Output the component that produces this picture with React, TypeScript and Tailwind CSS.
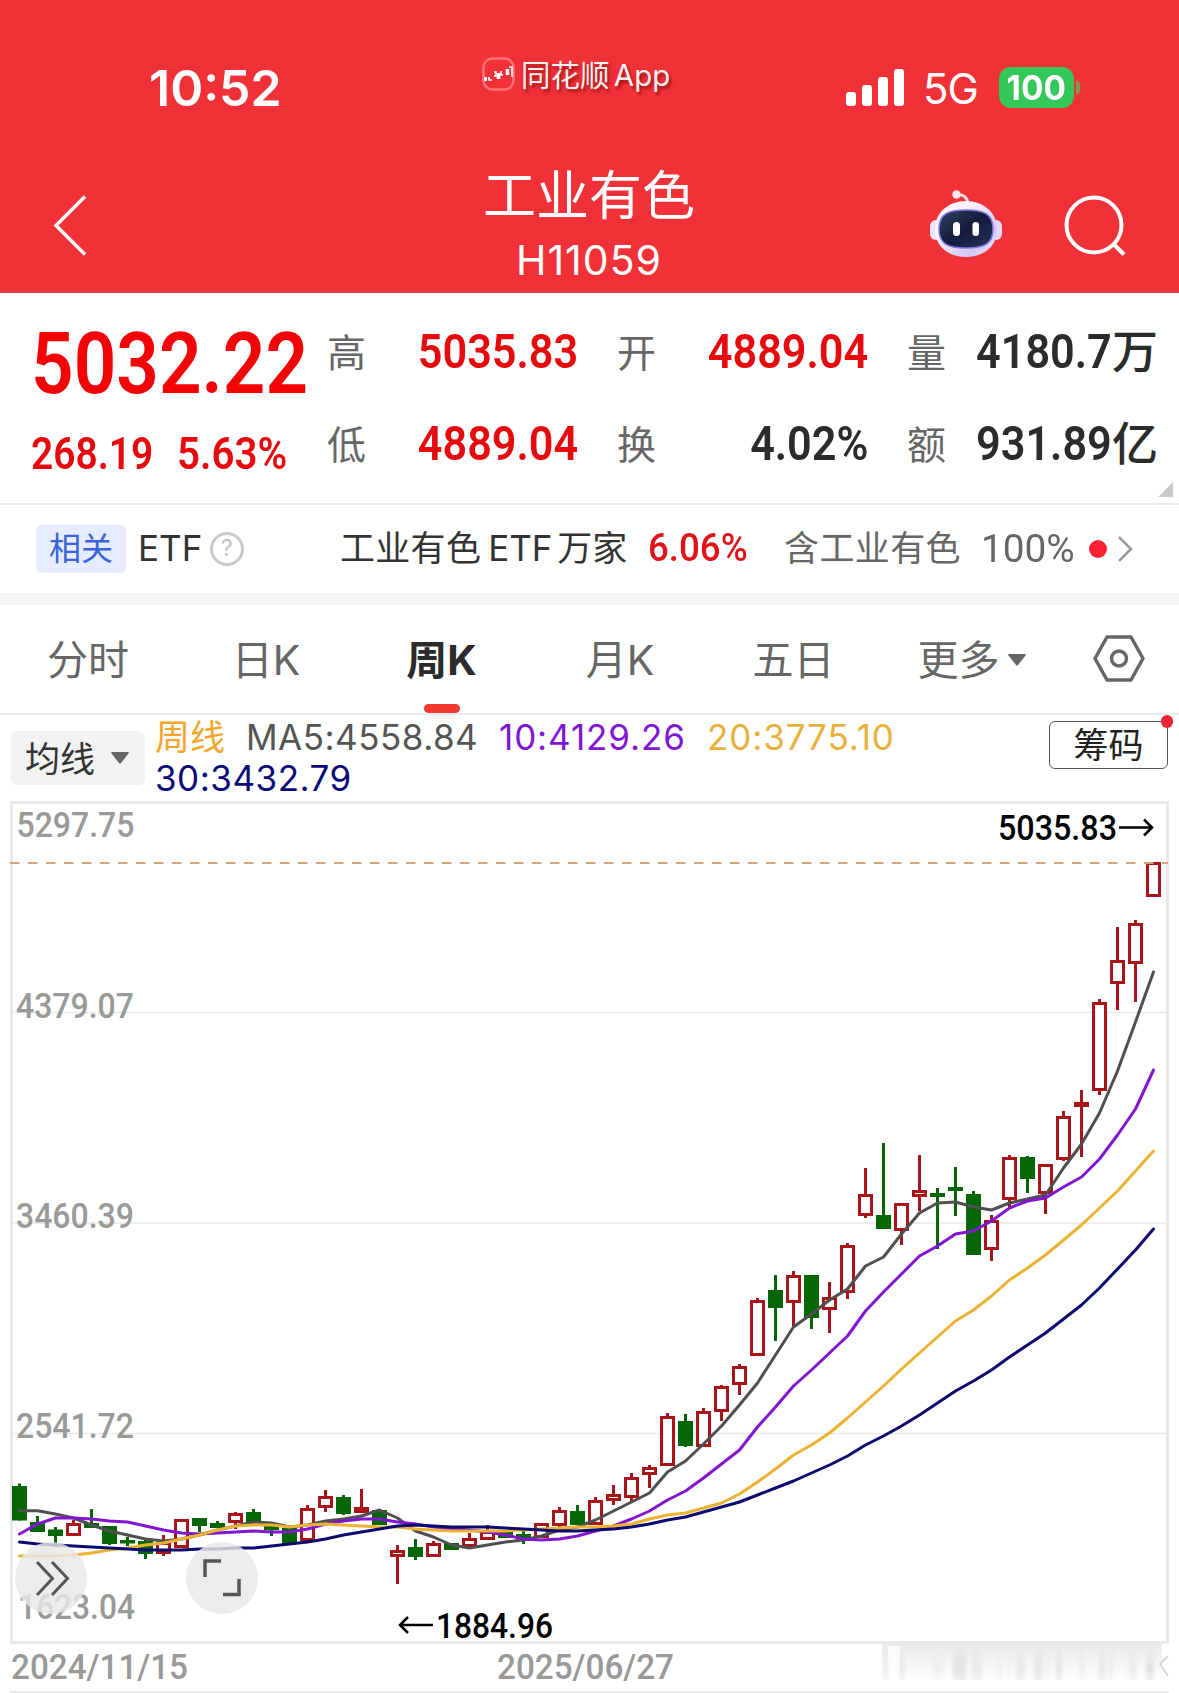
import { ReactNode } from "react";

type Candle = {
  up: boolean;
  top: number;
  bottom: number;
  high: number;
  low: number;
};

const UP = true;
const DOWN = false;

// [up, body top, body bottom, high, low] in chart pixels
const RAW: [boolean, number, number, number, number][] = [
  [DOWN, 1486, 1520.5, 1483.5, 1520.5],
  [DOWN, 1522, 1532, 1516, 1532],
  [DOWN, 1529.5, 1536, 1527, 1547],
  [UP, 1523, 1536, 1520, 1536],
  [DOWN, 1523, 1528, 1509, 1528],
  [DOWN, 1526, 1544, 1526, 1545],
  [DOWN, 1540, 1543.5, 1537, 1546],
  [DOWN, 1541, 1554, 1538, 1559],
  [UP, 1542, 1554, 1535, 1556],
  [UP, 1519, 1548, 1519, 1548],
  [DOWN, 1518, 1526, 1518, 1532],
  [DOWN, 1523, 1528, 1521, 1528],
  [UP, 1513, 1523, 1512, 1529],
  [DOWN, 1512, 1523, 1509, 1523],
  [DOWN, 1525, 1530, 1525, 1536],
  [DOWN, 1528, 1544, 1528, 1544],
  [UP, 1508, 1541, 1505, 1541],
  [UP, 1496, 1508, 1490, 1512],
  [DOWN, 1497, 1514, 1495, 1515],
  [UP, 1507, 1513, 1489, 1513],
  [DOWN, 1510, 1525, 1510, 1525],
  [UP, 1550, 1557, 1545, 1584],
  [DOWN, 1547, 1557, 1539, 1560],
  [UP, 1543, 1557, 1541, 1557],
  [DOWN, 1543, 1550, 1543, 1550],
  [UP, 1538, 1547, 1533, 1547],
  [UP, 1531, 1540, 1525, 1540],
  [DOWN, 1531, 1538, 1531, 1538],
  [DOWN, 1534, 1541, 1530, 1544],
  [UP, 1523, 1538, 1523, 1538],
  [UP, 1510, 1526, 1507, 1527],
  [DOWN, 1511, 1525, 1505, 1525],
  [UP, 1500, 1525, 1497, 1525],
  [UP, 1494, 1501, 1485, 1505],
  [UP, 1477, 1498, 1473, 1503],
  [UP, 1467, 1475, 1465, 1488],
  [UP, 1416, 1466, 1413, 1466],
  [DOWN, 1421, 1446, 1414, 1447],
  [UP, 1411, 1447, 1408, 1447],
  [UP, 1386, 1412, 1385, 1421],
  [UP, 1366, 1385, 1364, 1395],
  [UP, 1300, 1356, 1298, 1356],
  [DOWN, 1290, 1308, 1275, 1341],
  [UP, 1275, 1303, 1271, 1327],
  [DOWN, 1275, 1318, 1275, 1329],
  [UP, 1297, 1310, 1282, 1333],
  [UP, 1245, 1293, 1243, 1299],
  [UP, 1194, 1216, 1168, 1218],
  [DOWN, 1215, 1229, 1143, 1229],
  [UP, 1203, 1231, 1203, 1245],
  [UP, 1190, 1197, 1155, 1211],
  [DOWN, 1193, 1197, 1188, 1249],
  [DOWN, 1187, 1191, 1167, 1216],
  [DOWN, 1194, 1255, 1191, 1255],
  [UP, 1220, 1250, 1215, 1261],
  [UP, 1157, 1200, 1155, 1207],
  [DOWN, 1157, 1179, 1156, 1193],
  [UP, 1164, 1194, 1164, 1214],
  [UP, 1116, 1160, 1111, 1161],
  [UP, 1102, 1107, 1090, 1157],
  [UP, 1002, 1091, 999, 1095],
  [UP, 960, 984, 927, 1010],
  [UP, 923, 964, 920, 1002],
  [UP, 862, 897, 862, 897],
];

const candles: Candle[] = RAW.map(([up, top, bottom, high, low]) => ({ up, top, bottom, high, low }));

const ma5 = [
  1510.7, 1510.7, 1514, 1518, 1525, 1531, 1535, 1539, 1541, 1539, 1535, 1530, 1526, 1522, 1523, 1527,
  1525, 1521, 1519, 1516, 1510, 1518, 1531, 1537, 1545, 1548, 1545, 1542, 1540, 1536, 1530, 1527,
  1520, 1511, 1502, 1493, 1472, 1461, 1444, 1426, 1405, 1383, 1355, 1327, 1314, 1300, 1289, 1266,
  1257, 1234, 1213, 1203, 1202, 1207, 1210, 1203, 1199, 1195, 1168, 1144, 1113, 1071, 1022, 972,
];
const ma10 = [
  1534, 1524, 1518, 1518, 1519, 1521, 1522, 1526, 1530, 1533, 1534, 1533, 1532, 1531, 1532, 1532,
  1529, 1524, 1521, 1519, 1519, 1522, 1524, 1527, 1529, 1530, 1532, 1535, 1539, 1540, 1539, 1536,
  1531, 1526, 1519, 1511, 1500, 1491, 1478, 1464, 1450, 1427, 1407, 1386, 1370, 1353, 1336, 1311,
  1292, 1274, 1256, 1246, 1234, 1231, 1221, 1208, 1201, 1198, 1187, 1177, 1159, 1135, 1109, 1070,
];
const ma20 = [
  1556, 1556, 1556, 1555, 1553, 1550, 1548, 1545, 1543, 1539, 1535, 1530, 1526, 1525, 1525, 1527,
  1525, 1524, 1525, 1526, 1527, 1527, 1529, 1530, 1531, 1531, 1531, 1531, 1530, 1529, 1528, 1527,
  1527, 1526, 1524, 1519, 1515, 1513, 1508, 1503, 1494, 1482, 1469, 1455, 1445, 1433, 1418, 1402,
  1386, 1369, 1353, 1337, 1321, 1310, 1296, 1280, 1268, 1255, 1240, 1225, 1208, 1191, 1171, 1151,
];
const ma30 = [
  1542, 1544, 1545, 1546, 1547, 1548, 1549, 1550, 1550, 1550, 1549, 1549, 1548, 1548, 1546, 1544,
  1542, 1539, 1535, 1532, 1529, 1526, 1525, 1526, 1527, 1527, 1527, 1528, 1529, 1530, 1531, 1531,
  1530, 1529, 1527, 1524, 1520, 1517, 1512, 1507, 1502, 1495, 1488, 1481, 1473, 1465, 1456, 1445,
  1436, 1426, 1415, 1403, 1391, 1381, 1370, 1357, 1345, 1333, 1319, 1305, 1288, 1269, 1250, 1229,
];

const CHART_TOP = 795;
const candleX = (i: number) => 19.5 + i * 18;
const toPoints = (values: number[]) => values.map((y, i) => `${candleX(i)},${y}`).join(" ");

const axisLabels = [
  { text: "5297.75", x: 16.5, y: 837, width: 118 },
  { text: "4379.07", x: 16, y: 1017.5, width: 118 },
  { text: "3460.39", x: 16, y: 1228, width: 118 },
  { text: "2541.72", x: 16, y: 1438, width: 118 },
  { text: "1623.04", x: 18, y: 1619, width: 117 },
];

const dates = [
  { text: "2024/11/15", x: 11, width: 177 },
  { text: "2025/06/27", x: 497, width: 177 },
];

// Soft grey streaks at the end of the date row: [x, width, opacity]
const streaks = [
  [884, 4, 0.3], [900, 4, 0.4], [932, 12, 0.15], [953, 13, 0.4], [972, 10, 0.3], [997, 5, 0.15],
  [1008, 3, 0.15], [1016, 9, 0.3], [1034, 9, 0.35], [1047, 3, 0.2], [1057, 4, 0.55], [1080, 4, 0.25],
  [1099, 6, 0.35], [1109, 4, 0.25], [1129, 7, 0.25], [1147, 6, 0.5],
];

function StatusBar() {
  return (
    <div className="flex h-[150px] items-start">
      <div className="ml-[149px] mt-[62px] w-[333px] text-[50px] font-semibold leading-[52px]">
        10:52
      </div>
      <div className="mt-[57px] flex h-[36px] w-[364px] items-center">
        <svg className="-mt-[2px]" width="33" height="34" viewBox="0 0 33 34" fill="none">
          <rect x="1.5" y="1.5" width="30" height="31" rx="9" stroke="#ff7176" strokeWidth="2.5" />
          <path d="M2 22h3" stroke="#fff" strokeWidth="4" />
          <path d="M7 20v3h3M12 15h2v4h-2M19 14v4h2M27 10h3v10" stroke="#fff" strokeWidth="1.6" />
          <path d="M16.500 16v6M25.500 12v6" stroke="#fff" strokeWidth="3.5" />
        </svg>
        <span className="mt-[2px] ml-[6px] whitespace-nowrap text-[29.5px] leading-none text-white/95 [text-shadow:2px_3px_3px_rgba(90,0,0,0.55)]">
          同花顺 <span className="-ml-[4px]">App</span>
        </span>
      </div>
      <svg className="mt-[69px]" width="58" height="38" fill="#fff">
        <rect x="0" y="23" width="10" height="14" rx="3" />
        <rect x="16" y="16" width="10" height="21" rx="3" />
        <rect x="32" y="8" width="10" height="29" rx="3" />
        <rect x="48" y="0" width="10" height="37" rx="3" />
      </svg>
      <span className="ml-[19px] mt-[68px] w-[76px] text-[42px] leading-[42px] tracking-[-1px]">5G</span>
      <div className="mt-[67px] flex h-[41px] w-[75px] items-center justify-center rounded-[12px] bg-[#34c759] text-[34px] font-bold leading-none">
        <span className="inline-block scale-x-[.98]">100</span>
      </div>
      <div className="ml-[2px] mt-[81px] h-[13px] w-[4px] rounded-r-full bg-[#7d9a4b]" />
    </div>
  );
}

function Robot() {
  return (
    <svg width="74" height="68" viewBox="0 0 74 68" fill="none">
      <defs>
        <linearGradient id="shell" x1="0" y1="0" x2="1" y2="1">
          <stop offset="0.3" stopColor="#fdf3fa" />
          <stop offset="0.75" stopColor="#d3c6f6" />
          <stop offset="1" stopColor="#f0f0ff" />
        </linearGradient>
        <linearGradient id="visor" x1="0" y1="0" x2="1" y2="1">
          <stop offset="0" stopColor="#2f4663" />
          <stop offset="0.5" stopColor="#141a3c" />
          <stop offset="1" stopColor="#27345a" />
        </linearGradient>
      </defs>
      <path d="M28 5c6-1 10 2 11 8" stroke="#fbdfe6" strokeWidth="3" />
      <circle cx="27.500" cy="4.500" r="4.200" fill="#fdeaf0" />
      <rect x="1" y="30" width="12" height="20" rx="6" fill="#efe4fb" />
      <rect x="61" y="30" width="12" height="20" rx="6" fill="#e4d9fa" />
      <path d="M37 11C54 11 68 22 68 39C68 57 54 67 37 67C20 67 6 57 6 39C6 22 20 11 37 11Z" fill="url(#shell)" />
      <path d="M37 20C55 20 64 24 64 39C64 54 55 58 37 58C19 58 10 54 10 39C10 24 19 20 37 20Z" fill="url(#visor)" stroke="#7d74dd" strokeWidth="1.500" />
      <rect x="24" y="32" width="7" height="14" rx="3.500" fill="#fff" />
      <rect x="43.500" y="32" width="6.500" height="14" rx="3.200" fill="#fff" />
    </svg>
  );
}

function Header() {
  return (
    <header className="h-[293px] border-b-2 border-[#dd3b40] bg-[#f03137] text-white">
      <StatusBar />
      <div className="flex items-start">
        <svg className="ml-[51px] mt-[43px]" width="38" height="64" viewBox="0 0 38 64" fill="none" stroke="#fff" strokeWidth="3.5">
          <path d="M34 3.500L5 32.500L34 61.500" />
        </svg>
        <div className="ml-[339px] w-[322px] text-center">
          <h1 className="mt-[19px] text-[53px] leading-[54px] whitespace-nowrap">工业有色</h1>
          <p className="mt-[16px] text-[41px] leading-[42px] tracking-[1px]">H11059</p>
        </div>
        <div className="ml-[179px] mt-[40px]">
          <Robot />
        </div>
        <svg className="ml-[60px] mt-[43px]" width="64" height="64" viewBox="0 0 64 64" fill="none" stroke="#fff" strokeWidth="4">
          <circle cx="31" cy="32" r="27.500" />
          <path d="M50 50.500L61 61.500" />
        </svg>
      </div>
    </header>
  );
}

function Stat({ label, value, unit, red }: { label: string; value: string; unit?: string; red?: boolean }) {
  return (
    <div className="flex items-center justify-between">
      <span className="mt-[2px] text-[39px] leading-none text-[#666]">{label}</span>
      <span className={`flex items-center font-['Roboto'] text-[48px] leading-none ${red ? "text-[#e60a0f]" : "text-[#2b2b2b]"}`}>
        <span className="mt-[1px] inline-block origin-right scale-x-[.9] font-semibold">{value}</span>
        {unit && <span className="-mt-[6px] font-['Noto_Sans_CJK_SC'] text-[46px] font-medium">{unit}</span>}
      </span>
    </div>
  );
}

function Quote() {
  return (
    <section className="relative flex h-[212px] border-b-2 border-[#ececec] bg-white pl-[31px]">
      <div className="w-[296px] font-['Roboto'] text-[#e60a0f]">
        <div className="mt-[29px] h-[84px] origin-left scale-x-[.878] text-[85px] font-semibold leading-[84px] text-[#f30206]">
          5032.22
        </div>
        <div className="mt-[24px] flex h-[46px] font-semibold text-[44px] leading-[48px]">
          <span className="w-[146px] origin-left scale-x-[.885]">268.19</span>
          <span className="origin-left scale-x-[.915]">5.63%</span>
        </div>
      </div>
      <div className="mt-[12px] grid h-[184px] w-[831px] grid-cols-3 grid-rows-2 gap-x-[39px]">
        <Stat label="高" value="5035.83" red />
        <Stat label="开" value="4889.04" red />
        <Stat label="量" value="4180.7" unit="万" />
        <Stat label="低" value="4889.04" red />
        <Stat label="换" value="4.02%" />
        <Stat label="额" value="931.89" unit="亿" />
      </div>
      <svg className="absolute right-[6px] bottom-[6px]" width="15" height="15">
        <path d="M15 0V15H0Z" fill="#c9c9c9" />
      </svg>
    </section>
  );
}

function RelatedEtf() {
  return (
    <section className="flex h-[88px] items-center bg-white pb-[1px] pl-[36px] text-[35px] leading-none whitespace-nowrap text-[#333]">
      <span className="flex h-[48px] w-[90px] items-center justify-center rounded-[5px] bg-[#e6ecfe] text-[32px] text-[#3a63dc]">
        相关
      </span>
      <span className="ml-[12px] w-[72px]">ETF</span>
      <span className="flex h-[34px] w-[34px] items-center justify-center rounded-full border-[3px] border-[#c9c9c9] text-[23px] text-[#c0c0c0]">
        ?
      </span>
      <span className="ml-[96px] w-[308px]">
        <span className="tracking-[.3px]">工业有色</span>
        <span className="mr-[5px] ml-[7px] inline-block w-[64px]">ETF</span>
        <span>万家</span>
      </span>
      <span className="w-[136px] origin-left scale-x-[.94] font-['Roboto'] text-[39px] font-medium text-[#e01418]">6.06%</span>
      <span className="w-[197px] tracking-[.4px] text-[#666]">含工业有色</span>
      <span className="w-[108px] font-['Roboto'] text-[38px] text-[#666]">
        <span className="inline-block origin-left scale-x-[1.02]">100%</span>
      </span>
      <span className="h-[18px] w-[18px] rounded-full bg-[#fb2233]" />
      <svg className="ml-[10px]" width="16" height="28" viewBox="0 0 16 28" fill="none" stroke="#999" strokeWidth="2.500">
        <path d="M2 2L14 14L2 26" />
      </svg>
    </section>
  );
}

function Tab({ width, active, children }: { width: string; active?: boolean; children: ReactNode }) {
  return (
    <div className={`relative flex h-full items-center justify-center pt-[2px] ${width} ${active ? "font-bold text-[#2b2b2b]" : "text-[#666]"}`}>
      {children}
      {active && <span className="absolute bottom-0 h-[9px] w-[36px] rounded-full bg-[#f23a32]" />}
    </div>
  );
}

function Tabs() {
  return (
    <nav className="flex h-[110px] items-center border-b-2 border-[#ebebeb] bg-white text-[41px] leading-none whitespace-nowrap">
      <Tab width="w-[176px]">分时</Tab>
      <Tab width="w-[180px]">日K</Tab>
      <Tab width="w-[171px]" active>周K</Tab>
      <Tab width="w-[186px]">月K</Tab>
      <Tab width="w-[161px]">五日</Tab>
      <Tab width="w-[195px]">
        更多
        <svg className="ml-[8px]" width="18" height="12">
          <path d="M1 0H17Q18.500 0 17.500 1.500L10 11Q9 12 8 11L0.500 1.500Q-0.500 0 1 0Z" fill="#666" />
        </svg>
      </Tab>
      <svg className="-mt-[1px] ml-[24px]" width="52" height="47" viewBox="0 0 52 47" fill="none" stroke="#666" strokeWidth="3.5" strokeLinejoin="round">
        <path d="M14 2H38L50 23.500L38 45H14L2 23.500Z" />
        <circle cx="26" cy="23.500" r="7.500" />
      </svg>
    </nav>
  );
}

function AverageRow() {
  return (
    <div className="flex h-[80px] bg-white">
      <div className="mt-[16px] ml-[11px] flex h-[54px] w-[134px] items-center rounded-[6px] bg-[#f2f2f2] pl-[14px] text-[35px] leading-none text-[#333]">
        <span className="mt-[2px]">均线</span>
        <svg className="ml-[16px]" width="18" height="12">
          <path d="M1 0H17Q18.500 0 17.500 1.500L10 11Q9 12 8 11L0.500 1.500Q-0.500 0 1 0Z" fill="#666" />
        </svg>
      </div>
      <div className="ml-[10px] w-[894px] text-[35px] leading-[41px] whitespace-nowrap">
        <div className="mt-[2px] flex">
          <span className="w-[91px] text-[#f2a62b]">周线</span>
          <span className="w-[253px] tracking-[.5px] text-[#555]">MA5:4558.84</span>
          <span className="w-[208px] tracking-[.9px] text-[#8216d6]">10:4129.26</span>
          <span className="tracking-[.9px] text-[#e9b13b]">20:3775.10</span>
        </div>
        <div className="tracking-[.5px] text-[#0a0a7a]">30:3432.79</div>
      </div>
      <div className="relative mt-[6px] flex h-[48px] w-[119px] items-center justify-center rounded-[6px] border border-[#555] text-[35px] leading-none text-[#222]">
        筹码
        <span className="absolute -top-[7px] -right-[6px] h-[13px] w-[12px] rounded-full bg-[#ef2638]" />
      </div>
    </div>
  );
}

function CandleShape({ candle, x }: { candle: Candle; x: number }) {
  const { up, top, bottom, high, low } = candle;
  if (!up) {
    return (
      <g fill="#046604">
        <rect x={x - 1.5} y={high} width={3} height={low - high} />
        <rect x={x - 7.5} y={top} width={15} height={bottom - top} />
      </g>
    );
  }
  return (
    <g fill="#a9141a">
      <rect x={x - 1.5} y={high} width={3} height={top - high} />
      <rect x={x - 1.5} y={bottom} width={3} height={low - bottom} />
      <rect x={x - 6} y={top + 1.5} width={12} height={bottom - top - 3} fill="#fff" stroke="#a9141a" strokeWidth={3} />
    </g>
  );
}

function KLineChart() {
  return (
    <svg className="block" width="1179" height="898" viewBox={`0 ${CHART_TOP} 1179 898`} fill="none">
      <defs>
        <linearGradient id="streak" x1="0" y1="0" x2="0" y2="1">
          <stop offset="0" stopColor="#c9c9c9" stopOpacity="0.2" />
          <stop offset="0.7" stopColor="#bdbdbd" />
          <stop offset="1" stopColor="#c4c4c4" stopOpacity="0.7" />
        </linearGradient>
        <linearGradient id="haze" x1="0" y1="0" x2="0" y2="1">
          <stop offset="0" stopColor="#e9e9e9" />
          <stop offset="1" stopColor="#fefefe" />
        </linearGradient>
        <filter id="soft" x="-50%" width="200%">
          <feGaussianBlur stdDeviation="2 0.4" />
        </filter>
      </defs>

      <g stroke="#e9e9e9" strokeWidth="1.5">
        <path d="M12 1012.500H1167M12 1223H1167M12 1433.500H1167" />
        <path d="M10 1692H1169" strokeWidth="2" />
      </g>
      <path d="M11.500 802.500H1167.500V1642.500H11.500Z" stroke="#e8e8e8" strokeWidth="3" />

      <g fontFamily="Roboto" fontSize="35.500" fontWeight="500" fill="#999">
        {axisLabels.map((l) => (
          <text key={l.text} x={l.x} y={l.y} textLength={l.width} lengthAdjust="spacingAndGlyphs">{l.text}</text>
        ))}
        {dates.map((d) => (
          <text key={d.text} x={d.x} y="1679" textLength={d.width} lengthAdjust="spacingAndGlyphs">{d.text}</text>
        ))}
      </g>

      {candles.map((c, i) => (
        <CandleShape key={i} candle={c} x={candleX(i)} />
      ))}
      <path d="M10 863H1168" stroke="#d3a57c" strokeWidth="2" strokeDasharray="9.500 8.500" />

      <g strokeWidth="3" strokeLinejoin="round" strokeLinecap="round">
        <polyline points={toPoints(ma5)} stroke="#4f4f4f" />
        <polyline points={toPoints(ma10)} stroke="#8216d0" />
        <polyline points={toPoints(ma20)} stroke="#ecb232" />
        <polyline points={toPoints(ma30)} stroke="#0a0a70" />
      </g>

      <g fontFamily="Roboto" fontSize="35.500" fontWeight="500" fill="#000">
        <text x="998" y="840" textLength="119" lengthAdjust="spacingAndGlyphs">5035.83</text>
        <text x="436" y="1638" textLength="117" lengthAdjust="spacingAndGlyphs">1884.96</text>
      </g>
      <path d="M1119 827.500H1152M1144 819.500L1152 827.500L1144 835.500" stroke="#000" strokeWidth="2.500" />
      <path d="M433 1625H400M408 1617L400 1625L408 1633" stroke="#000" strokeWidth="2.500" />

      {/* Floating chart controls */}
      <circle cx="51" cy="1578" r="36" fill="#e8e8e8" fillOpacity="0.82" />
      <path d="M37 1562L52.500 1578.500L37 1595M52 1562L67.500 1578.500L52 1595" stroke="#555" strokeWidth="3" />
      <circle cx="222" cy="1578" r="36" fill="#e8e8e8" fillOpacity="0.82" />
      <path d="M205 1577V1561H221M239 1579V1594.500H223" stroke="#555" strokeWidth="3.500" />

      <rect x="882" y="1643" width="280" height="36" fill="url(#haze)" />
      <rect x="888" y="1646" width="12" height="34" fill="#fff" fillOpacity="0.8" />
      <g filter="url(#soft)" fill="url(#streak)">
        {streaks.map(([x, w, o]) => (
          <rect key={x} x={x} y="1646" width={w} height="34" opacity={o} />
        ))}
      </g>
      <path d="M1168 1656L1160 1664L1168 1676" stroke="#d8d8d8" strokeWidth="2" />
    </svg>
  );
}

export default function App() {
  return (
    <main className="flex h-[1693px] w-[1179px] flex-col overflow-hidden bg-white font-['Inter','Noto_Sans_CJK_SC',sans-serif]">
      <Header />
      <Quote />
      <RelatedEtf />
      <div className="h-[12px] bg-[#f4f4f4]" />
      <Tabs />
      <AverageRow />
      <KLineChart />
    </main>
  );
}
